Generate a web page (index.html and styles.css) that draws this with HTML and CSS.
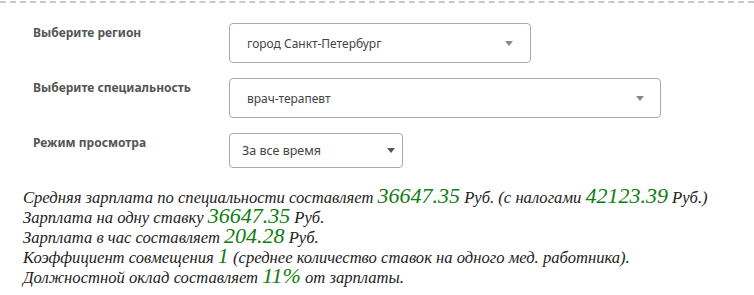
FILE: index.html
```html
<!DOCTYPE html>
<html lang="ru">
<head>
    <meta charset="UTF-8">
    <title>Зарплата по специальности</title>
    <link rel="stylesheet" href="styles.css">
</head>
<body>
    <div class="container">
        <div class="filters">
            <div class="filter-label">Выберите регион</div>
            <div class="select select-region">
                <span class="select-text">город Санкт-Петербург</span>
                <span class="select-arrow"></span>
            </div>

            <div class="filter-label">Выберите специальность</div>
            <div class="select select-spec">
                <span class="select-text">врач-терапевт</span>
                <span class="select-arrow"></span>
            </div>

            <div class="filter-label">Режим просмотра</div>
            <div class="select select-mode">
                <span class="select-text">За все время</span>
                <span class="select-arrow"></span>
            </div>
        </div>

        <div class="result">
            Средняя зарплата по специальности составляет <span class="num">36647.35</span> Руб. (с налогами <span class="num">42123.39</span> Руб.)<br>
            Зарплата на одну ставку <span class="num">36647.35</span> Руб.<br>
            Зарплата в час составляет <span class="num">204.28</span> Руб.<br>
            Коэффициент совмещения <span class="num">1</span> (среднее количество ставок на одного мед. работника).<br>
            Должностной оклад составляет <span class="num">11%</span> от зарплаты.
        </div>
    </div>
</body>
</html>
```

FILE: styles.css
```css
/* общие */
* {
    margin: 0;
    padding: 0;
    box-sizing: border-box;
}

body {
    background: #fff;
    font-family: 'Noto Sans', 'Open Sans', sans-serif;
}

.container {
    margin-top: 1px;
    border-top: 2px dashed #c8c8c8;
    padding: 20px 0 0 0;
}

/* фильтры */
.filters {
    display: grid;
    grid-template-columns: 196px auto;
    row-gap: 15px;
    padding-left: 33px;
    justify-items: start;
}

.filter-label {
    font-size: 12px;
    font-weight: bold;
    color: #555;
    line-height: 20px;
}

.select {
    display: flex;
    align-items: center;
    justify-content: space-between;
    border: 1px solid #aaa;
    border-radius: 4px;
    background: #fff;
    color: #444;
    font-size: 12px;
}

.select-region {
    width: 302px;
    height: 40px;
    padding: 0 17px 0 17px;
}

.select-spec {
    width: 432px;
    height: 40px;
    padding: 0 16px 0 17px;
}

.select-mode {
    width: 174px;
    height: 35px;
    padding: 0 7px 0 12px;
    font-size: 12.5px;
}

.select-arrow {
    width: 0;
    height: 0;
    border-left: 4px solid transparent;
    border-right: 4px solid transparent;
    border-top: 5px solid #888;
}

.select-mode .select-arrow {
    border-top-color: #555;
}

/* результат */
.result {
    margin-top: 20px;
    padding-left: 23px;
    font-family: 'Liberation Serif', 'Times New Roman', serif;
    font-style: italic;
    font-size: 16.6px;
    line-height: 20px;
    color: #222;
}

.num {
    font-size: 22px;
    line-height: 10px;
    color: #0f7d0f;
}
```
